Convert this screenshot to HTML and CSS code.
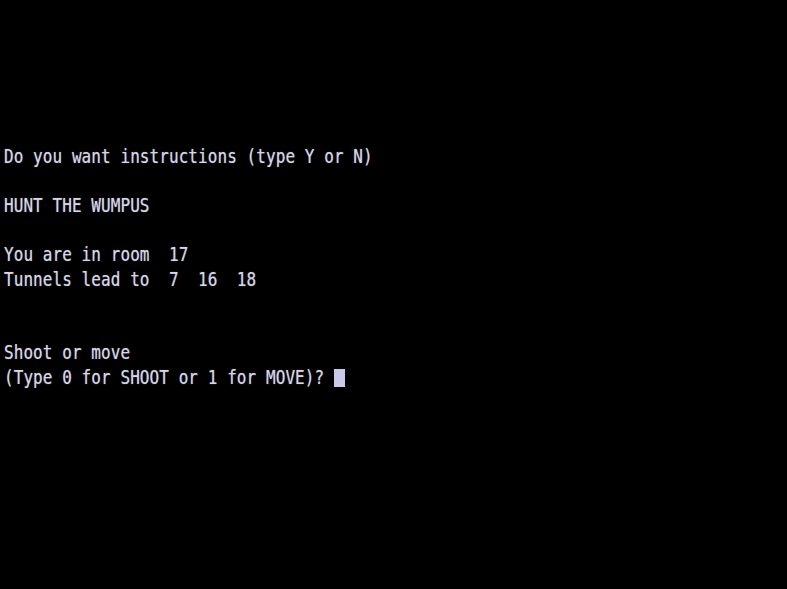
FILE: index.html
```html
<!DOCTYPE html>
<html>
<head>
<meta charset="utf-8">
<link rel="stylesheet" href="styles.css">
</head>
<body>
<div class="screen">
  <div class="line"><span class="txt">Do you want instructions (type Y or N)</span></div>
  <div class="line"></div>
  <div class="line"><span class="txt">HUNT THE WUMPUS</span></div>
  <div class="line"></div>
  <div class="line"><span class="txt">You are in room  17</span></div>
  <div class="line"><span class="txt">Tunnels lead to  7  16  18</span></div>
  <div class="line"></div>
  <div class="line"></div>
  <div class="line"><span class="txt">Shoot or move</span></div>
  <div class="line"><span class="txt">(Type 0 for SHOOT or 1 for MOVE)? </span><span class="cursor"></span></div>
</div>
</body>
</html>
```
FILE: styles.css
```css
html, body {
  margin: 0;
  padding: 0;
  background: #000;
  width: 787px;
  height: 589px;
  overflow: hidden;
}
.screen {
  padding: 145px 0 0 4px;
  font-family: "DejaVu Sans Mono", "Liberation Mono", monospace;
  font-size: 16px;
  letter-spacing: 0.07px;
  color: #d6d6e6;
}
.line {
  height: 24.5px;
  line-height: 24.5px;
  white-space: pre;
  display: flex;
  align-items: center;
}
.txt {
  display: inline-block;
  transform: scaleY(1.25);
  transform-origin: 50% 50%;
  text-shadow: 0 0 1px rgba(200, 200, 230, 0.6);
}
.cursor {
  display: inline-block;
  width: 11px;
  height: 18px;
  background: #c9c9ea;
}
```
